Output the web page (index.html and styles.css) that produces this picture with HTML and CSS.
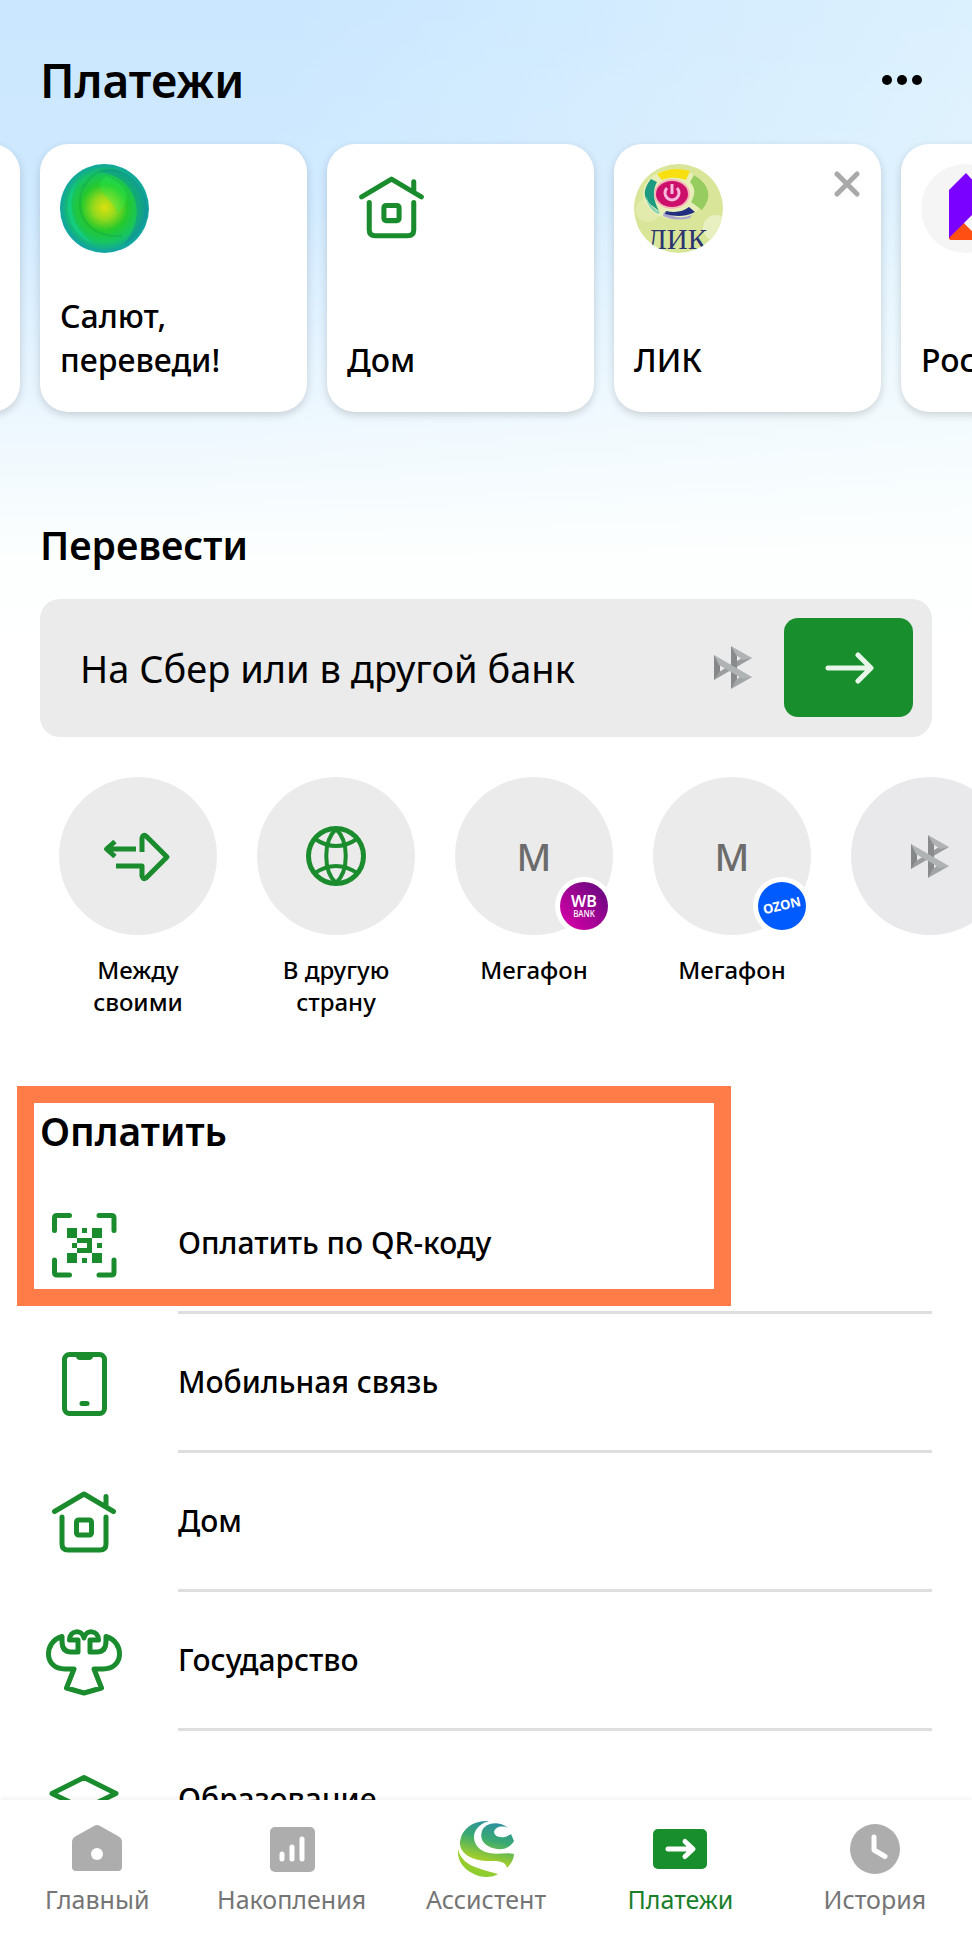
FILE: index.html
```html
<!DOCTYPE html>
<html lang="ru">
<head>
	<meta charset="UTF-8">
	<meta name="viewport" content="width=device-width, initial-scale=1">
	<title>Платежи</title>
	<link rel="stylesheet" href="styles.css">
</head>
<body>
	<svg class="sprite" width="0" height="0" aria-hidden="true">
		<symbol id="house" viewBox="0 0 88 88">
			<path class="line" d="M14.500 32.500L44 15L73.500 32.500M66 17.500V28M22 38V65Q22 71 28 71H60Q66 71 66 65V38"/>
			<rect class="line" x="36.500" y="41" width="15" height="15" rx="2"/>
		</symbol>
		<symbol id="ribbon" viewBox="12 14 42 47">
			<path fill="#858788" d="M14 25L20 30V45L14 50z"/>
			<path fill="#9a9c9d" d="M14 50L52 28L42 28L19 42z"/>
			<path fill="#888a8b" d="M31 16L37 22V53L31 59z"/>
			<path fill="#b0b3b4" d="M31 16L52 28L43 30L36 25z"/>
			<path fill="#a2a5a6" d="M31 59L52 47L42 45L36 50z"/>
			<path fill="#b0b3b4" d="M14 25L52 47L43 49L19 35z"/>
		</symbol>
	</svg>

	<main class="content">
		<header class="header">
			<h1>Платежи</h1>
			<button type="button" class="more" aria-label="Ещё">
				<svg width="40" height="10" viewBox="0 0 40 10"><circle cx="5" cy="5" r="5"/><circle cx="20" cy="5" r="5"/><circle cx="35" cy="5" r="5"/></svg>
			</button>
		</header>

		<div class="cards">
			<div class="card card_prev"></div>
			<div class="card">
				<a href="#">
					<svg class="card_icon" viewBox="0 0 89 89">
						<defs>
							<radialGradient id="ball" cx="50%" cy="49%" r="52%">
								<stop offset="0" stop-color="#dce010"/>
								<stop offset=".25" stop-color="#94d91c"/>
								<stop offset=".5" stop-color="#25c92c"/>
								<stop offset=".75" stop-color="#16c462"/>
								<stop offset=".92" stop-color="#12a898"/>
								<stop offset="1" stop-color="#14a4ac"/>
							</radialGradient>
						</defs>
						<circle cx="44.500" cy="44.500" r="44.500" fill="url(#ball)"/>
						<path fill="#12d9a0" opacity=".45" d="M18 16C0 36 6 70 34 80C10 62 6 38 18 16z"/>
						<path fill="#0c7fa0" opacity=".4" d="M38 8C60 -2 86 18 88 46C86 62 76 76 64 80C90 50 74 10 38 8z"/>
						<path fill="#2cef50" opacity=".35" d="M46 12C28 26 54 34 57 48C52 54 88 30 46 12z"/>
						<path fill="none" stroke="#0d8a50" stroke-width="2" opacity=".25" d="M24 20C12 50 28 74 62 72M24 24C30 8 46 2 60 8"/>
					</svg>
					<span>Салют,<br>переведи!</span>
				</a>
			</div>
			<div class="card">
				<a href="#">
					<svg class="card_icon"><use href="#house"/></svg>
					<span>Дом</span>
				</a>
			</div>
			<div class="card">
				<a href="#">
					<svg class="card_icon" viewBox="0 0 89 89">
						<clipPath id="round"><circle cx="44.500" cy="44.500" r="44.500"/></clipPath>
						<g clip-path="url(#round)">
							<rect width="89" height="89" fill="#d9e69a"/>
							<circle cx="82" cy="64" r="13" fill="#e8efc0"/>
							<circle cx="14" cy="46" r="12" fill="#e2ebac"/>
							<ellipse cx="40" cy="30" rx="31" ry="25" fill="#e8eeb8"/>
							<path fill="#f7df10" d="M23 10Q38 2 56 7L52 16Q38 11 28 16z"/>
							<path fill="#96cc60" d="M60 11Q84 26 68 46L57 38Q64 26 56 18z"/>
							<path fill="#1d9b80" d="M17 15Q5 30 16 40L25 47Q16 30 23 18z"/>
							<path fill="#7fd3b8" d="M12 32Q16 44 26 48L24 50Q13 44 12 32z"/>
							<path fill="#a9a6cf" d="M30 48Q44 57 58 51L56 54Q42 58 29 52z"/>
							<path fill="#222f80" d="M32 47Q46 50 55 43L61 48Q48 55 31 50z"/>
							<ellipse cx="38" cy="30" rx="18" ry="15" fill="#f3b7b8"/>
							<ellipse cx="38" cy="30" rx="16" ry="13" fill="#cc0f6b"/>
							<path class="power" d="M33 24A7 7 0 1 0 43 24M38 20V30"/>
							<text class="lik" x="43" y="85">ЛИК</text>
						</g>
					</svg>
					<span>ЛИК</span>
				</a>
				<button type="button" class="close" aria-label="Закрыть">
					<svg width="26" height="26" viewBox="0 0 26 26"><path d="M3 3L23 23M23 3L3 23"/></svg>
				</button>
			</div>
			<div class="card">
				<a href="#">
					<svg class="card_icon" viewBox="0 0 89 89">
						<circle cx="44.500" cy="44.500" r="44.500" fill="#f5f5f6"/>
						<path fill="#7a00ff" d="M45 9L61 26V58L44 59L28 75V26z"/>
						<path fill="#ff4f12" d="M43 59L60 76H31Q28 76 28 74z"/>
						<path fill="#f5f5f6" d="M43 59L54 48V70z"/>
					</svg>
					<span>Ростелеком</span>
				</a>
			</div>
		</div>

		<section class="transfer">
			<h2><label for="search">Перевести</label></h2>
			<form class="field">
				<input type="text" id="search" placeholder="На Сбер или в другой банк">
				<svg class="ribbon"><use href="#ribbon"/></svg>
				<button type="submit" class="go" aria-label="Продолжить">
					<svg width="50" height="34" viewBox="0 0 50 34"><path d="M4 17H46M34 4L47 17L34 30"/></svg>
				</button>
			</form>
			<div class="contacts">
				<a href="#" class="contact">
					<span class="circle">
						<svg class="contact_icon" viewBox="0 0 80 80"><path class="line line_butt" d="M38 33H8M17 25.500L8.500 33L17 40.500M44 36V22Q45 18 48 20L69 41L48 62Q45 64 44 60V50H18"/></svg>
					</span>
					Между своими
				</a>
				<a href="#" class="contact">
					<span class="circle">
						<svg class="contact_icon" viewBox="0 0 80 80">
							<circle class="line" cx="40" cy="40" r="27.500"/>
							<path class="line line_thin" d="M40 13C27 25 27 55 40 67C53 55 53 25 40 13M19 23Q40 37 61 23M19 57Q40 43 61 57"/>
						</svg>
					</span>
					В другую страну
				</a>
				<a href="#" class="contact">
					<span class="circle">М
						<svg class="badge" viewBox="0 0 58 58">
							<defs>
								<linearGradient id="wb" x1="0" y1="1" x2="1" y2="0"><stop offset=".1" stop-color="#d400a6"/><stop offset="1" stop-color="#5c0a7c"/></linearGradient>
							</defs>
							<circle cx="29" cy="29" r="29" fill="#fff"/>
							<circle cx="29" cy="29" r="24" fill="url(#wb)"/>
							<text class="wb" x="29" y="30">WB</text>
							<text class="wb_bank" x="29" y="40">BANK</text>
						</svg>
					</span>
					Мегафон
				</a>
				<a href="#" class="contact">
					<span class="circle">М
						<svg class="badge" viewBox="0 0 58 58">
							<circle cx="29" cy="29" r="29" fill="#fff"/>
							<circle cx="29" cy="29" r="24" fill="#005bff"/>
							<text class="ozon" x="29" y="33" transform="rotate(-13 29 29)">OZON</text>
						</svg>
					</span>
					Мегафон
				</a>
				<a href="#" class="contact" aria-label="Ещё контакт">
					<span class="circle circle_cold"><svg class="ribbon"><use href="#ribbon"/></svg></span>
				</a>
			</div>
		</section>

		<section class="pay">
			<h2>Оплатить</h2>
			<a href="#" class="row">
				<svg class="row_icon" viewBox="0 0 88 88">
					<path class="line" d="M14.500 29.500V17Q14.500 14.500 17 14.500H29.500M59 14.500H71.500Q74 14.500 74 17V29.500M74 59V71.500Q74 74 71.500 74H59M29.500 74H17Q14.500 74 14.500 71.500V59"/>
					<path class="fill" d="M27 27h10v10h-10zM52 27h10v10h-10zM27 52h10v10h-10zM52 52h10v10h-10zM42 27h5v5h-5zM42 57h5v5h-5zM32 42h5v5h-5zM57 42h5v5h-5zM37 37h15v15h-15v-5h10v-5h-10z"/>
				</svg>
				<span>Оплатить по QR-коду</span>
			</a>
			<a href="#" class="row">
				<svg class="row_icon" viewBox="0 0 88 88">
					<rect class="line" x="24.500" y="14.500" width="40" height="59" rx="5"/>
					<path class="fill" d="M35 14H54Q53 20 49 20H40Q36 20 35 14z"/>
					<path class="line" d="M42 63.500H47"/>
				</svg>
				<span>Мобильная связь</span>
			</a>
			<a href="#" class="row">
				<svg class="row_icon"><use href="#house"/></svg>
				<span>Дом</span>
			</a>
			<a href="#" class="row">
				<svg class="row_icon" viewBox="0 0 88 88"><path class="line" d="M44 75L26.500 70L34 51H25C3 51 4 23 22 18.500V23Q22 34 31 34H38V22H29.500C29.500 12 42 11 44 20C46 11 58.500 12 58.500 22H50V34H57Q66 34 66 23V18.500C84 23 85 51 63 51H54L61.500 70z"/></svg>
				<span>Государство</span>
			</a>
			<a href="#" class="row">
				<svg class="row_icon" viewBox="0 0 88 88"><path class="line" d="M44 20.500L76 36.500L44 52L12 36.500zM24 44V62Q44 74 64 62V44"/></svg>
				<span>Образование</span>
			</a>
			<div class="highlight"></div>
		</section>
	</main>

	<nav class="tabs">
		<a href="#">
			<svg viewBox="0 0 60 60"><path d="M27 8Q30 6 33 8L51 18Q55 20 55 24V49Q55 53 51 53H9Q5 53 5 49V24Q5 20 9 18z"/><circle class="hole" cx="30" cy="36" r="6"/></svg>
			Главный
		</a>
		<a href="#">
			<svg viewBox="0 0 60 60"><rect x="8" y="9" width="45" height="45" rx="5"/><path class="white" d="M20 36V41M30 29V41M40 21V41"/></svg>
			Накопления
		</a>
		<a href="#">
			<svg viewBox="0 0 60 60">
				<defs>
					<linearGradient id="swirl" gradientUnits="userSpaceOnUse" x1="38" y1="2" x2="24" y2="58"><stop offset="0" stop-color="#2b8ca6"/><stop offset=".35" stop-color="#3aaa72"/><stop offset=".7" stop-color="#9fcd2c"/><stop offset="1" stop-color="#8ccc2e"/></linearGradient>
				</defs>
				<g fill="url(#swirl)">
					<path d="M33 3C14 2 4 14 4 26C5 38 20 43 33 43C42 43 50 43 51 50C55 46 58 41 58 36C50 34 42 37 33 35C14 31 12 9 33 3z"/>
					<path d="M26 13C29 5 42 2 52 10C46 7 39 9 38 14C39 20 48 21 55 16L58 23C54 30 47 32 41 31C29 29 23 22 26 13z"/>
					<path d="M2 31C4 41 12 47 22 50C30 53 36 54 42 56C36 60 24 60 16 55C6 50 1 41 2 31z"/>
				</g>
			</svg>
			Ассистент
		</a>
		<a href="#" class="active" aria-current="page">
			<svg viewBox="0 0 60 60"><rect x="3" y="11" width="54" height="40" rx="5"/><path class="white" d="M18 31H42M35 23.500L43 31L35 38.500"/></svg>
			Платежи
		</a>
		<a href="#">
			<svg viewBox="0 0 60 60"><circle cx="30" cy="31" r="25"/><path class="white" d="M29 19V32L40 38.500"/></svg>
			История
		</a>
	</nav>
</body>
</html>
```

FILE: styles.css
```css
*
{
	box-sizing: border-box;
}
body
{
	margin: 0;
	height: 100vh;
	display: flex;
	flex-direction: column;
	font-family: "Noto Sans", "Open Sans", sans-serif;
	color: #000;
	background: linear-gradient(to bottom, rgba(255,255,255,0) 0, rgba(255,255,255,0.1) 200px, rgba(253,255,254,0.7) 430px, #fdfffe 560px, #fff 720px), linear-gradient(105deg, #cae7ff 20%, #e8f7fd 95%);
}
a
{
	color: inherit;
	text-decoration: none;
}
button
{
	border: none;
	padding: 0;
	background: none;
	cursor: pointer;
}
h1, h2
{
	margin: 0;
	font-weight: 600;
}
h1
{
	font-size: 46px;
	line-height: 80px;
}
h2
{
	font-size: 39px;
	line-height: 48px;
}
svg
{
	display: block;
	flex: none;
}
.sprite
{
	position: absolute;
}
.line
{
	fill: none;
	stroke: #1a8c2d;
	stroke-width: 5;
	stroke-linecap: round;
	stroke-linejoin: round;
}
.line_butt
{
	stroke-linecap: butt;
}
.line_thin
{
	stroke-width: 4;
}
.fill
{
	fill: #1a8c2d;
}
.content
{
	flex: 1;
	min-height: 0;
	overflow: hidden;
}

/* header */
.header
{
	display: flex;
	align-items: center;
	justify-content: space-between;
	padding: 40px 50px 24px 40px;
}

/* cards */
.cards
{
	display: flex;
	gap: 20px;
	padding-left: 40px;
}
.card
{
	position: relative;
	flex: none;
	width: 267px;
	height: 268px;
	border-radius: 28px;
	background: #fff;
	box-shadow: 0 3px 8px rgba(0,0,0,0.16);
}
.card_prev
{
	margin-left: -287px;
}
.card a
{
	display: flex;
	flex-direction: column;
	justify-content: space-between;
	height: 100%;
	padding: 20px 20px 30px;
	font-size: 32px;
	font-weight: 500;
	line-height: 44px;
}
.card_icon
{
	width: 89px;
	height: 89px;
}
.close
{
	position: absolute;
	top: 27px;
	right: 21px;
}
.close path
{
	fill: none;
	stroke: #a9a9a9;
	stroke-width: 5;
	stroke-linecap: round;
}
.power
{
	fill: none;
	stroke: #f7b9dc;
	stroke-width: 3;
}
.lik
{
	font: 29px "Liberation Serif", serif;
	text-anchor: middle;
	fill: #2b3470;
}

/* transfer */
.transfer
{
	padding: 109px 40px 0;
}
.field
{
	display: flex;
	align-items: center;
	margin: 30px 0 40px;
	padding: 19px 19px 20px 40px;
	border-radius: 20px;
	background: #eaebea;
}
.field input
{
	flex: 1;
	min-width: 0;
	padding: 0;
	border: none;
	outline: none;
	background: none;
	font: 38px "Noto Sans", "Open Sans", sans-serif;
	color: #000;
}
.field input::placeholder
{
	color: #000;
	opacity: 1;
}
.ribbon
{
	width: 42px;
	height: 47px;
}
.go
{
	display: flex;
	align-items: center;
	justify-content: center;
	width: 129px;
	height: 99px;
	margin-left: 30px;
	border-radius: 14px;
	background: #188f2c;
}
.go path
{
	fill: none;
	stroke: #e8f6ea;
	stroke-width: 5;
	stroke-linecap: round;
	stroke-linejoin: round;
}
.contacts
{
	display: flex;
	gap: 40px;
	padding-left: 19px;
}
.contact
{
	flex: none;
	width: 158px;
	font-size: 24px;
	font-weight: 500;
	line-height: 32px;
	text-align: center;
}
.circle
{
	position: relative;
	display: flex;
	align-items: center;
	justify-content: center;
	height: 158px;
	margin-bottom: 19px;
	border-radius: 50%;
	background: #ebebeb;
	font-size: 38px;
	color: #6b6b6b;
}
.circle_cold
{
	background: #e9e9ec;
}
.contact_icon
{
	width: 80px;
	height: 80px;
}
.badge
{
	position: absolute;
	right: 0;
	bottom: 0;
	width: 58px;
	height: 58px;
}
.badge text
{
	text-anchor: middle;
	fill: #fff;
}
.wb
{
	font-size: 16px;
	font-weight: 600;
	line-height: 1;
}
.wb_bank
{
	font-size: 8px;
	line-height: 1;
}
.ozon
{
	font-size: 13px;
	font-weight: 700;
}

/* pay */
.pay
{
	position: relative;
	padding: 0 40px;
	margin-top: 89px;
}
.pay h2
{
	margin-bottom: 20px;
}
.row
{
	display: flex;
	align-items: center;
	gap: 50px;
	font-size: 30px;
	font-weight: 500;
}
.row_icon
{
	width: 88px;
	height: 88px;
}
.row span
{
	flex: 1;
	line-height: 136px;
	border-bottom: 3px solid #dedede;
}
.highlight
{
	position: absolute;
	top: -21px;
	left: 17px;
	width: 714px;
	height: 220px;
	border: 17px solid #ff7b47;
	pointer-events: none;
}

/* bottom tabs */
.tabs
{
	display: flex;
	padding: 18px 0 18px;
	background: #fff;
	box-shadow: 0 -2px 4px rgba(0,0,0,0.05);
	z-index: 1;
}
.tabs a
{
	flex: 1;
	display: flex;
	flex-direction: column;
	align-items: center;
	font-size: 25px;
	line-height: 42px;
	color: #757575;
}
.tabs svg
{
	width: 60px;
	height: 60px;
	fill: #adadad;
}
.tabs .active
{
	color: #1a7f2b;
}
.tabs .active svg
{
	fill: #188f2c;
}
.tabs .hole
{
	fill: #fff;
}
.tabs .white
{
	fill: none;
	stroke: #fff;
	stroke-width: 5;
	stroke-linecap: round;
	stroke-linejoin: round;
}
```
